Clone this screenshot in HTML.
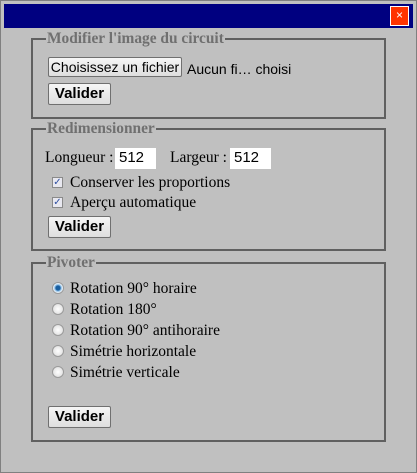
<!DOCTYPE html>
<html><head><style>
body{margin:0;width:417px;height:473px;background:#c0c0c0;position:relative;overflow:hidden;font-family:"Liberation Serif",serif;}
.a{position:absolute}
.frame{left:0;top:0;width:415px;height:471px;border:1px solid #808080;}
.title{left:4px;top:4px;width:409px;height:24px;background:#000080;}
.close{left:390px;top:6px;width:17px;height:18px;background:#ff3300;border:1px solid #fff;color:#fff;font:12px "Liberation Sans",sans-serif;text-align:center;line-height:17px}
.fs{border:2px solid #606060;box-sizing:border-box}
.lg{background:#c0c0c0;color:#707070;font-weight:bold;font-size:15.4px;padding:0 1px;line-height:16px}
.btn{box-sizing:border-box;border:1px solid #707070;border-radius:2px;background:linear-gradient(#f6f6f6,#dedede);font:bold 15px "Liberation Sans",sans-serif;text-align:center;color:#000}
.t{font-size:15.5px;color:#000;white-space:nowrap}
.inp{background:#fff;font:15px "Liberation Sans",sans-serif;padding-left:4px;box-sizing:border-box;line-height:20px}
.cb{width:11px;height:11px;border:1px solid #8a8a8a;background:#e8e8f0;box-sizing:border-box;font:10px "Liberation Sans",sans-serif;color:#3050a0;line-height:9px;text-align:center}
.rd{width:12px;height:12px;border-radius:50%;border:1px solid #9a9a9a;background:radial-gradient(#fff,#d8d8d8);box-sizing:border-box}
</style></head><body>
<div class="a frame"></div>
<div class="a title"></div>
<div class="a close">×</div>

<div class="a fs" style="left:31px;top:38px;width:355px;height:81px"></div>
<div class="a lg" style="left:46px;top:31px">Modifier l'image du circuit</div>
<div class="a btn" style="left:48px;top:57px;width:134px;height:20px;font-weight:normal;font-size:14px;line-height:18px">Choisissez un fichier</div>
<div class="a" style="left:187px;top:61px;font:14px 'Liberation Sans',sans-serif">Aucun fi… choisi</div>
<div class="a btn" style="left:48px;top:83px;width:63px;height:22px;line-height:20px">Valider</div>

<div class="a fs" style="left:31px;top:128px;width:355px;height:123px"></div>
<div class="a lg" style="left:46px;top:121px">Redimensionner</div>
<div class="a t" style="left:45px;top:149px">Longueur :</div>
<div class="a inp" style="left:115px;top:148px;width:41px;height:21px">512</div>
<div class="a t" style="left:170px;top:149px">Largeur :</div>
<div class="a inp" style="left:230px;top:148px;width:41px;height:21px">512</div>
<div class="a cb" style="left:52px;top:177px">✓</div>
<div class="a t" style="left:70px;top:174px">Conserver les proportions</div>
<div class="a cb" style="left:52px;top:197px">✓</div>
<div class="a t" style="left:70px;top:194px">Aperçu automatique</div>
<div class="a btn" style="left:48px;top:216px;width:63px;height:22px;line-height:20px">Valider</div>

<div class="a fs" style="left:31px;top:262px;width:355px;height:180px"></div>
<div class="a lg" style="left:46px;top:255px">Pivoter</div>
<div class="a rd" style="left:52px;top:282px;background:radial-gradient(#1a5fa0 30%,#8fc0e8 45%,#fff 70%)"></div>
<div class="a t" style="left:70px;top:280px">Rotation 90° horaire</div>
<div class="a rd" style="left:52px;top:303px"></div>
<div class="a t" style="left:70px;top:301px">Rotation 180°</div>
<div class="a rd" style="left:52px;top:324px"></div>
<div class="a t" style="left:70px;top:322px">Rotation 90° antihoraire</div>
<div class="a rd" style="left:52px;top:345px"></div>
<div class="a t" style="left:70px;top:343px">Simétrie horizontale</div>
<div class="a rd" style="left:52px;top:366px"></div>
<div class="a t" style="left:70px;top:364px">Simétrie verticale</div>
<div class="a btn" style="left:48px;top:406px;width:63px;height:22px;line-height:20px">Valider</div>
</body></html>
